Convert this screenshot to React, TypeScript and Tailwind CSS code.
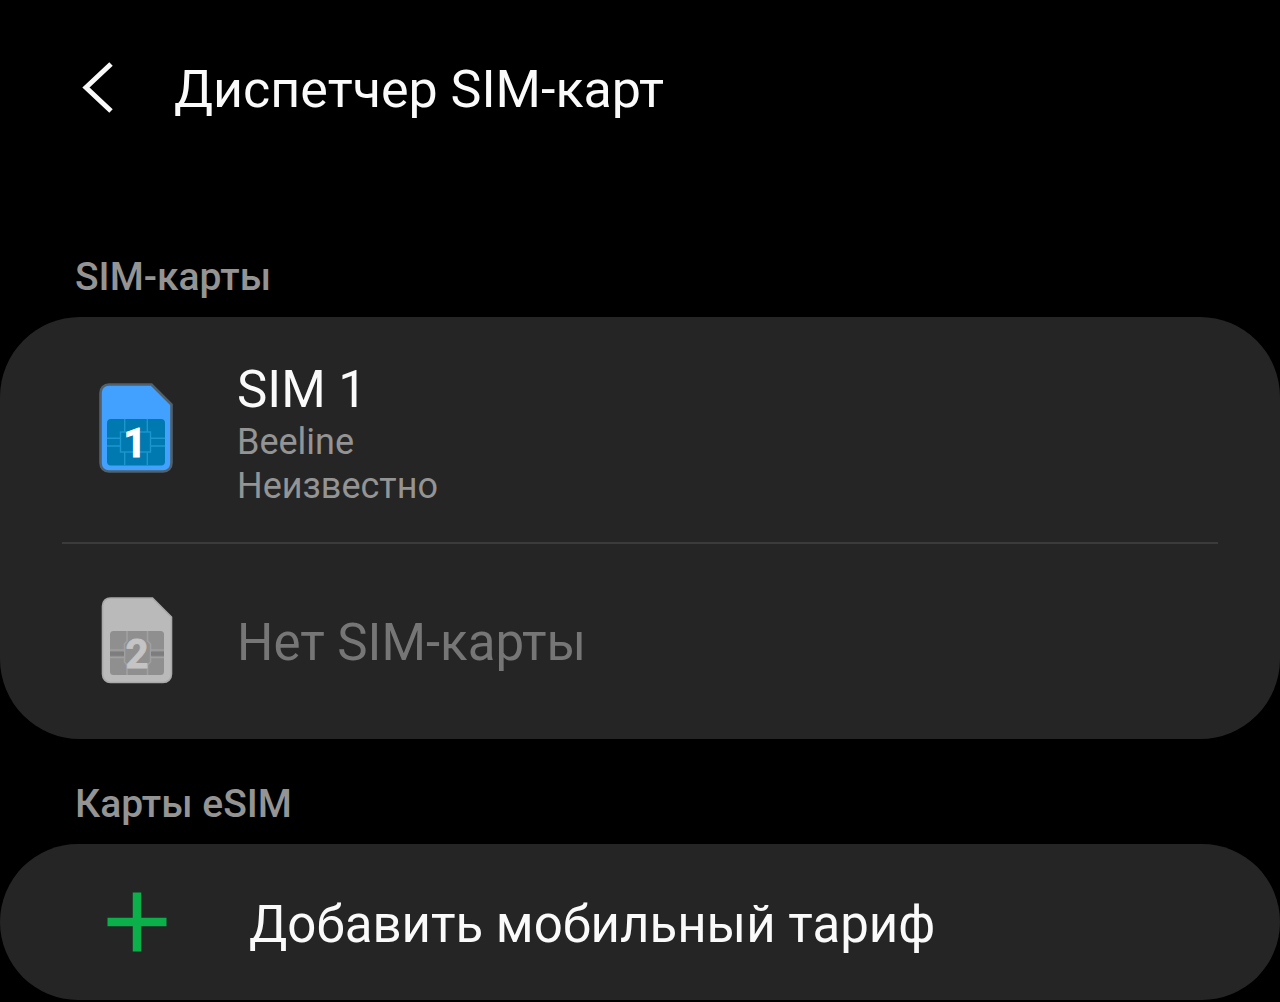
import React from "react";

type SimIconProps = {
  slot: number;
  active: boolean;
};

function SimIcon({ slot, active }: SimIconProps) {
  if (active) {
    return (
      <svg viewBox="0 0 74 90" className="h-[90px] w-[74px] shrink-0" aria-hidden="true">
        <path
          d="M10 1.5H52.5L72.5 21.5V80C72.5 85 69 88.5 64 88.5H10C5 88.5 1.5 85 1.5 80V10C1.5 5 5 1.5 10 1.5Z"
          fill="#42a0ff"
          stroke="#50606c"
          strokeWidth="2.6"
        />
        <rect x="8" y="36" width="58" height="46.5" rx="4" fill="#0079b0" />
        <g stroke="#1c96cf" strokeWidth="1.4" fill="none">
          <path d="M25.7 36V49M48.3 36V49M25.7 69V82.5M48.3 69V82.5" />
          <path d="M8 55.3H21.5M8 63H21.5M51.5 55.3H66M51.5 63H66" />
          <rect x="21.5" y="49" width="30" height="20" />
        </g>
        <text
          x="36"
          y="73.5"
          textAnchor="middle"
          fontFamily="Roboto, sans-serif"
          fontWeight="700"
          fontSize="40"
          fill="#ffffff"
          stroke="#ffffff"
          strokeWidth="1"
        >
          {slot}
        </text>
      </svg>
    );
  }
  return (
    <svg viewBox="0 0 74 90" className="h-[90px] w-[74px] shrink-0" aria-hidden="true">
      <path
        d="M11.5 3H53.5L72.5 22V79C72.5 84 69 87.5 64 87.5H11.5C7 87.5 3.5 84 3.5 79V11C3.5 6 7 3 11.5 3Z"
        fill="#bababa"
        stroke="#a9a9a9"
        strokeWidth="1.6"
      />
      <rect x="11" y="36" width="54" height="44" rx="3.5" fill="#8f8f8f" />
      <g stroke="#a0a0a0" strokeWidth="1.6" fill="none">
        <path d="M28 36V46L25.5 49V67L28 70V80M48.5 36V46L51.5 49V67L48.5 70V80" />
        <path d="M11 55H25M11 62.5H25M52 55H65M52 62.5H65" />
      </g>
      <path d="M11 58.7H25M52 58.7H65" stroke="#7d7d7d" strokeWidth="4" />
      <text
        x="38"
        y="72.5"
        textAnchor="middle"
        fontFamily="Roboto, sans-serif"
        fontWeight="700"
        fontSize="40"
        fill="#c4c4c4"
        stroke="#c4c4c4"
        strokeWidth="0.8"
      >
        {slot}
      </text>
    </svg>
  );
}

function SectionTitle({ children }: { children: React.ReactNode }) {
  return (
    <h2 className="pb-4 pl-[75px] text-[39px] leading-[48px] font-medium text-[#949494]">
      {children}
    </h2>
  );
}

export default function App() {
  return (
    <main className="min-h-screen bg-black font-['Roboto',sans-serif] text-[#fafafa]">
      <header className="flex items-center gap-14 pt-[54px] pl-[78px]">
        <button type="button" aria-label="Назад" className="shrink-0">
          <svg viewBox="0 0 40 64" className="h-16 w-10" fill="none" stroke="#fafafa" strokeWidth="5" aria-hidden="true">
            <path d="M33 8L8 31.5L33 55" />
          </svg>
        </button>
        <h1 className="pt-1 text-[52px] leading-[64px] font-normal">Диспетчер SIM-карт</h1>
      </header>

      <section className="pt-[131px]">
        <SectionTitle>SIM-карты</SectionTitle>
        <div className="rounded-[80px] bg-[#252525]">
          <button type="button" className="flex h-[225px] w-full items-center gap-16 pb-1 pl-[99px] text-left">
            <SimIcon slot={1} active />
            <span className="flex flex-col pt-3">
              <span className="text-[51px] leading-[60px]">SIM 1</span>
              <span className="text-[36px] leading-[44px] text-[#949494]">Beeline</span>
              <span className="text-[36px] leading-[44px] text-[#949494]">Неизвестно</span>
            </span>
          </button>
          <hr className="mx-[62px] border-t-2 border-[#3b3b3b]" />
          <button type="button" disabled className="flex h-[195px] w-full items-center gap-16 pb-1 pl-[99px] text-left">
            <SimIcon slot={2} active={false} />
            <span className="pt-1.5 text-[51px] leading-[60px] text-[#767676]">Нет SIM-карты</span>
          </button>
        </div>
      </section>

      <section className="pt-[41px]">
        <SectionTitle>Карты eSIM</SectionTitle>
        <button type="button" className="flex h-[156px] w-full items-center gap-[82px] rounded-[80px] bg-[#252525] pl-[107px] text-left">
          <svg viewBox="0 0 60 60" className="size-[60px] shrink-0" stroke="#0bb04a" strokeWidth="8.5" aria-hidden="true">
            <path d="M30 0.5V59.5M0.5 30H59.5" />
          </svg>
          <span className="pt-1.5 text-[51px] leading-[60px]">Добавить мобильный тариф</span>
        </button>
      </section>
    </main>
  );
}
